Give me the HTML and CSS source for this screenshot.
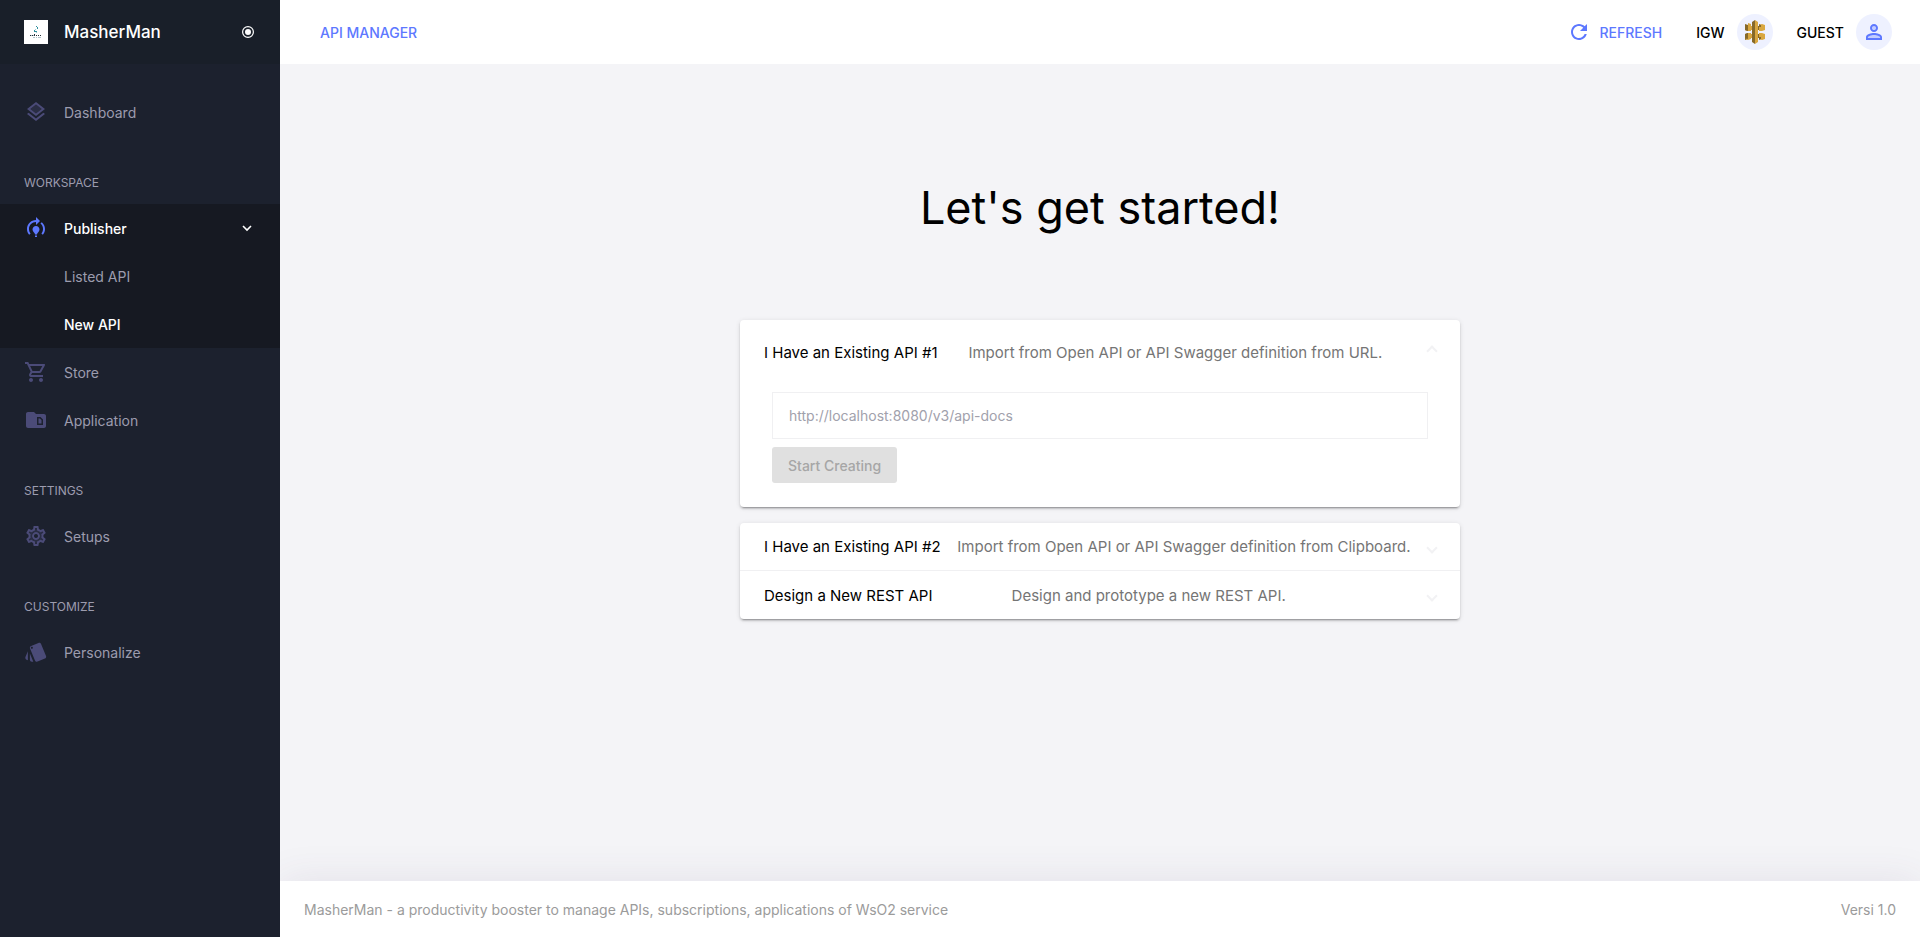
FILE: index.html
```html
<!DOCTYPE html>
<html lang="en">
<head>
<meta charset="utf-8">
<title>MasherMan</title>
<link rel="stylesheet" href="styles.css">
</head>
<body>
<div class="app">
  <aside class="sidebar">
    <div class="brand">
      <svg class="brand-logo" viewBox="0 0 24 24" aria-hidden="true">
        <rect width="24" height="24" fill="#fff"/>
        <path d="M12 6h1v1h-1zM13 7h1v2h-1zM10 10h1v2h-1zM11 11h2v1h-2z" fill="#2f8f9d"/>
        <path d="M11 9h1v1h-1zM12 12h1v1h-1z" fill="#9fcdd3"/>
        <path d="M6 15h1v1H6zM8 15h1v1H8zM10 14h1v2h-1zM12 15h1v1h-1zM14 15h1v1h-1zM16 15h1v1h-1z" fill="#27303a"/>
        <path d="M7 15h1v1H7zM9 15h1v1H9zM9 17h2v1H9zM12 17h1v1h-1zM14 17h3v1h-3z" fill="#b4c6cc"/>
      </svg>
      <span class="brand-name">MasherMan</span>
      <button class="pin" type="button" aria-label="Pin menu">
        <svg class="pin-icon" viewBox="0 0 12 12"><circle cx="6" cy="6" r="5.4" fill="none" stroke="#fff" stroke-width="1.2"/><circle cx="6" cy="6" r="3" fill="#fff"/></svg>
      </button>
    </div>
    <nav class="menu">
      <a class="item" href="#"><svg class="icon" viewBox="0 0 24 24"><path opacity=".3" d="M6.26 9L12 13.47 17.74 9 12 4.53z"/><path d="M11.99 18.54l-7.37-5.73L3 14.07l9 7 9-7-1.63-1.27zM12 16l7.36-5.73L21 9l-9-7-9 7 1.63 1.27L12 16zm0-11.47L17.74 9 12 13.47 6.26 9 12 4.53z"/></svg>Dashboard</a>
      <h2 class="section">WORKSPACE</h2>
      <div class="group">
        <a class="item active" href="#"><svg class="icon" viewBox="0 0 24 24"><path d="M15.5 13.5c0 2-2.5 3.5-2.5 5h-2c0-1.5-2.5-3-2.5-5 0-1.93 1.57-3.5 3.5-3.5s3.5 1.57 3.5 3.5zM13 19.5h-2V21h2v-1.5zM19 13c0 1.68-.59 3.21-1.58 4.42l1.42 1.42C20.18 17.27 21 15.23 21 13c0-2.74-1.23-5.19-3.16-6.84l-1.42 1.42C17.99 8.86 19 10.82 19 13zM16 5l-4-4v3C7.03 4 3 8.03 3 13c0 2.23.82 4.27 2.16 5.84l1.42-1.42C5.59 16.21 5 14.68 5 13c0-3.86 3.14-7 7-7v3l4-4z"/></svg>Publisher<svg class="caret" viewBox="0 0 10 10"><path d="M1 3l4 4 4-4" fill="none" stroke="#fff" stroke-width="1.6"/></svg></a>
        <a class="item sub" href="#">Listed API</a>
        <a class="item sub active" href="#">New API</a>
      </div>
      <a class="item" href="#"><svg class="icon" viewBox="0 0 24 24"><path d="M15.55 13c.75 0 1.41-.41 1.75-1.03l3.58-6.49A.996.996 0 0 0 20.01 4H5.21l-.94-2H1v2h2l3.6 7.59-1.35 2.44C4.52 15.37 5.48 17 7 17h12v-2H7l1.1-2h7.45zM6.16 6h12.15l-2.76 5H8.53L6.16 6zM7 18c-1.1 0-1.99.9-1.99 2S5.9 22 7 22s2-.9 2-2-.9-2-2-2zm10 0c-1.1 0-1.99.9-1.99 2s.89 2 1.99 2 2-.9 2-2-.9-2-2-2z"/></svg>Store</a>
      <a class="item" href="#"><svg class="icon" viewBox="0 0 24 24"><path d="M15.88 10.5l1.62 1.62v3.38h-3v-5h1.38zM22 8v10c0 1.1-.9 2-2 2H4c-1.1 0-1.99-.9-1.99-2L2 6c0-1.1.9-2 2-2h6l2 2h8c1.1 0 2 .9 2 2zm-3 3.5L16.5 9H13v8h6v-5.5z"/></svg>Application</a>
      <h2 class="section">SETTINGS</h2>
      <a class="item" href="#"><svg class="icon" viewBox="0 0 24 24"><path opacity=".3" fill-rule="evenodd" d="M12 4.5l1.5 2.2 3 1 2-.3.8 1.5-1.5 2v2.3l1.5 2-.8 1.4-2.2-.4-2.8 1.2L12 19.6l-1.5-2.2-2.8-1.2-2.2.4-.8-1.4 1.5-2v-2.3l-1.5-2 .8-1.5 2 .3 3-1zM12 8a4 4 0 1 0 0 8 4 4 0 0 0 0-8z"/><path d="M19.43 12.98c.04-.32.07-.64.07-.98 0-.34-.03-.66-.07-.98l2.11-1.65c.19-.15.24-.42.12-.64l-2-3.46c-.09-.16-.26-.25-.44-.25-.06 0-.12.01-.17.03l-2.49 1c-.52-.4-1.08-.73-1.69-.98l-.38-2.65C14.46 2.18 14.25 2 14 2h-4c-.25 0-.46.18-.49.42l-.38 2.65c-.61.25-1.17.59-1.69.98l-2.49-1c-.06-.02-.12-.03-.18-.03-.17 0-.34.09-.43.25l-2 3.46c-.13.22-.07.49.12.64l2.11 1.65c-.04.32-.07.65-.07.98 0 .33.03.66.07.98l-2.11 1.65c-.19.15-.24.42-.12.64l2 3.46c.09.16.26.25.44.25.06 0 .12-.01.17-.03l2.49-1c.52.4 1.08.73 1.69.98l.38 2.65c.03.24.24.42.49.42h4c.25 0 .46-.18.49-.42l.38-2.65c.61-.25 1.17-.59 1.69-.98l2.49 1c.06.02.12.03.18.03.17 0 .34-.09.43-.25l2-3.46c.12-.22.07-.49-.12-.64l-2.11-1.65zm-1.98-1.71c.04.31.05.52.05.73 0 .21-.02.43-.05.73l-.14 1.13.89.7 1.08.84-.7 1.21-1.27-.51-1.04-.42-.9.68c-.43.32-.84.56-1.25.73l-1.06.43-.16 1.13-.2 1.35h-1.4l-.19-1.35-.16-1.13-1.06-.43c-.43-.18-.83-.41-1.23-.71l-.91-.7-1.06.43-1.27.51-.7-1.21 1.08-.84.89-.7-.14-1.13c-.03-.31-.05-.54-.05-.74s.02-.43.05-.73l.14-1.13-.89-.7-1.08-.84.7-1.21 1.27.51 1.04.42.9-.68c.43-.32.84-.56 1.25-.73l1.06-.43.16-1.13.2-1.35h1.39l.19 1.35.16 1.13 1.06.43c.43.18.83.41 1.23.71l.91.7 1.06-.43 1.27-.51.7 1.21-1.07.85-.89.7.14 1.13zM12 8c-2.21 0-4 1.79-4 4s1.79 4 4 4 4-1.79 4-4-1.79-4-4-4zm0 6c-1.1 0-2-.9-2-2s.9-2 2-2 2 .9 2 2-.9 2-2 2z"/></svg>Setups</a>
      <h2 class="section">CUSTOMIZE</h2>
      <a class="item" href="#"><svg class="icon" viewBox="0 0 24 24"><path d="M2.53 19.65l1.34.56v-9.03l-2.43 5.86c-.41 1.02.08 2.19 1.09 2.61zm19.5-3.7L17.07 3.98c-.31-.75-1.04-1.21-1.81-1.23-.26 0-.53.04-.79.15L7.1 5.95c-.75.31-1.21 1.03-1.23 1.8-.01.27.04.54.15.8l4.96 11.97c.31.76 1.05 1.22 1.83 1.23.26 0 .52-.05.77-.15l7.36-3.05c1.02-.42 1.51-1.59 1.09-2.6zM7.88 8.75c-.55 0-1-.45-1-1s.45-1 1-1 1 .45 1 1-.45 1-1 1zm-2 11c0 1.1.9 2 2 2h1.45l-3.45-8.34v6.34z"/></svg>Personalize</a>
    </nav>
  </aside>

  <div class="page">
    <header class="topbar">
      <a class="crumb" href="#">API MANAGER</a>
      <div class="tools">
        <button class="refresh" type="button"><svg class="icon" viewBox="0 0 24 24"><path d="M17.65 6.35C16.2 4.9 14.21 4 12 4c-4.42 0-7.99 3.58-7.99 8s3.57 8 7.99 8c3.73 0 6.84-2.55 7.73-6h-2.08c-.82 2.33-3.04 4-5.65 4-3.31 0-6-2.69-6-6s2.69-6 6-6c1.66 0 3.14.69 4.22 1.78L13 11h7V4l-2.35 2.35z"/></svg>REFRESH</button>
        <button class="user" type="button">IGW
          <span class="avatar"><svg class="icon" viewBox="0 0 24 24">
            <path d="M2 4l3 1v1h4v4H5v1l-3-1zM2 14l3-1v1h4v4H5v1l-3 1z" fill="#876929"/>
            <path d="M5 3l3 1v2h2v4H8v1H5L2 10l3-1zM5 13h3v1h2v4H8v1l-3 1-3-1 3-1z" fill="#d9a741"/>
            <path d="M2 5l3 1v5l-3-1zM2 14l3-1v6l-3-1z" fill="#876929"/>
            <path d="M14 6h2v4h-2zM14 14h2v4h-2z" fill="#876929"/>
            <path d="M16 5l3-1 3 1v5l-3 1h-3zM16 13h3l3 1v5l-3 1-3-1z" fill="#d9a741"/>
            <path d="M16 4l2 1v2h-2zM16 17h2v2l-2 1z" fill="#876929"/>
            <path d="M9 2l3-2v24l-3-2z" fill="#876929"/><path d="M12 0l3 2v20l-3 2z" fill="#d9a741"/>
          </svg></span>
        </button>
        <button class="user" type="button">GUEST
          <span class="avatar"><svg class="icon" viewBox="0 0 24 24"><circle cx="12" cy="8" r="2.5" opacity=".3"/><path opacity=".3" d="M5 17c0-1 4-3 7-3s7 2 7 3v2H5z"/><path d="M12 5.9c1.16 0 2.1.94 2.1 2.1s-.94 2.1-2.1 2.1S9.9 9.16 9.9 8s.94-2.1 2.1-2.1m0 9c2.97 0 6.1 1.46 6.1 2.1v1.1H5.9V17c0-.64 3.13-2.1 6.1-2.1M12 4C9.79 4 8 5.79 8 8s1.79 4 4 4 4-1.79 4-4-1.79-4-4-4zm0 9c-2.67 0-8 1.34-8 4v3h16v-3c0-2.66-5.33-4-8-4z"/></svg></span>
        </button>
      </div>
    </header>

    <main class="content">
      <h1 class="title">Let's get started!</h1>
      <div class="accordion">
        <section class="card">
          <button class="panel-head open" type="button" aria-expanded="true">
            <span class="panel-title">I Have an Existing API #1</span>
            <span class="panel-text">Import from Open API or API Swagger definition from URL.</span>
            <span class="arrow"></span>
          </button>
          <form class="panel-body">
            <input class="url" type="text" aria-label="API definition URL" placeholder="http://localhost:8080/v3/api-docs">
            <button class="start" type="button" disabled>Start Creating</button>
          </form>
        </section>
        <section class="card">
          <button class="panel-head" type="button" aria-expanded="false">
            <span class="panel-title">I Have an Existing API #2</span>
            <span class="panel-text">Import from Open API or API Swagger definition from Clipboard.</span>
            <span class="arrow"></span>
          </button>
          <button class="panel-head" type="button" aria-expanded="false">
            <span class="panel-title">Design a New REST API</span>
            <span class="panel-text">Design and prototype a new REST API.</span>
            <span class="arrow"></span>
          </button>
        </section>
      </div>
    </main>

    <footer class="footer">
      <span>MasherMan - a productivity booster to manage APIs, subscriptions, applications of WsO2 service</span>
      <span>Versi 1.0</span>
    </footer>
  </div>
</div>
</body>
</html>
```
FILE: styles.css
```css
*, *::after { box-sizing: border-box; }

body {
  margin: 0;
  font-family: Inter, "Liberation Sans", sans-serif;
  font-size: 14px;
  line-height: 21px;
  color: #000;
  background: #f4f4f7;
}

button, input { font: inherit; }
button { border: 0; padding: 0; background: none; color: inherit; cursor: pointer; }
a { color: inherit; text-decoration: none; }

.app { display: flex; min-height: 100vh; }
.icon { width: 24px; height: 24px; flex: none; fill: currentColor; }

/* Sidebar */
.sidebar { flex: none; width: 280px; background: #1c212e; color: #9c9cae; }
.brand {
  display: flex;
  align-items: center;
  height: 64px;
  padding: 0 26px 0 24px;
  background: #191f29;
  color: #fff;
}
.brand-logo { width: 24px; height: 24px; margin-right: 16px; }
.brand-name { flex: 1; font-size: 17px; font-weight: 500; }
.pin { display: flex; }
.pin-icon { width: 12px; height: 12px; }

.menu { padding-top: 24px; }
.item { display: flex; align-items: center; height: 48px; padding: 0 28px 0 24px; }
.item .icon { margin-right: 16px; color: #4b4b78; }
.item.sub { padding-left: 64px; }
.item.active { color: #fff; font-weight: 500; }
.item.active .icon { color: #5d78ff; }
.caret { width: 10px; height: 10px; margin-left: auto; }
.group { background: #161922; }
.section {
  margin: 0;
  padding: 36px 24px 11px;
  font-size: 12px;
  font-weight: 400;
}

/* Top bar */
.page { flex: 1; display: flex; flex-direction: column; min-width: 0; }
.topbar {
  display: flex;
  align-items: center;
  justify-content: space-between;
  height: 64px;
  padding: 0 28px 0 40px;
  background: #fff;
  font-weight: 500;
}
.crumb, .refresh { color: #5d78ff; }
.tools { display: flex; align-items: center; gap: 24px; }
.refresh { display: flex; align-items: center; gap: 8px; margin-right: 10px; }
.user { display: flex; align-items: center; gap: 12px; }
.avatar {
  display: flex;
  align-items: center;
  justify-content: center;
  width: 36px;
  height: 36px;
  border-radius: 50%;
  background: #eef1ff;
  color: #5d78ff;
}

/* Content */
.content { flex: 1; padding: 112px 32px 48px; }
.title { margin: 0 0 80px; font-size: 45px; line-height: 64px; font-weight: 400; text-align: center; }
.accordion { display: flex; flex-direction: column; gap: 16px; max-width: 720px; margin: 0 auto; }
.card {
  border-radius: 4px;
  background: #fff;
  box-shadow: 0 3px 1px -2px rgba(0, 0, 0, .2), 0 2px 2px 0 rgba(0, 0, 0, .14), 0 1px 5px 0 rgba(0, 0, 0, .12);
}
.panel-head {
  display: flex;
  align-items: center;
  width: 100%;
  height: 48px;
  padding: 0 24px;
  font-size: 15px;
  text-align: left;
}
.panel-head:not(:last-child):not(.open) { border-bottom: 1px solid #f0f0f2; }
.panel-head.open { height: 64px; }
.panel-title { flex: 1 1 auto; margin-right: 16px; }
.panel-text { flex: 2 1 auto; margin-right: 16px; color: #757575; }
.arrow { width: 8px; height: 10px; padding-top: 2px; }
.arrow::after {
  content: "";
  display: block;
  width: 8px;
  height: 8px;
  border: solid #f2f2f4;
  border-width: 0 2px 2px 0;
  transform: rotate(45deg);
}
.open .arrow { transform: rotate(180deg); }

.panel-body { display: flex; flex-direction: column; align-items: flex-start; gap: 8px; padding: 8px 32px 24px; }
.url {
  width: 100%;
  height: 47px;
  padding: 0 16px;
  border: 1px solid #f0f0f2;
  background: #fff;
  color: #333;
}
.url::placeholder { color: #a1a1ac; opacity: 1; }
.start {
  height: 36px;
  padding: 0 16px;
  border-radius: 3px;
  background: #e0e0e0;
  color: #a6a6a6;
  font-weight: 500;
}

/* Footer */
.footer {
  display: flex;
  align-items: center;
  justify-content: space-between;
  height: 56px;
  padding: 0 24px;
  background: #fff;
  color: #9b9b9b;
  box-shadow: 0 0 40px rgba(82, 63, 105, .1);
  clip-path: inset(-60px 0 0 0);
}
```
